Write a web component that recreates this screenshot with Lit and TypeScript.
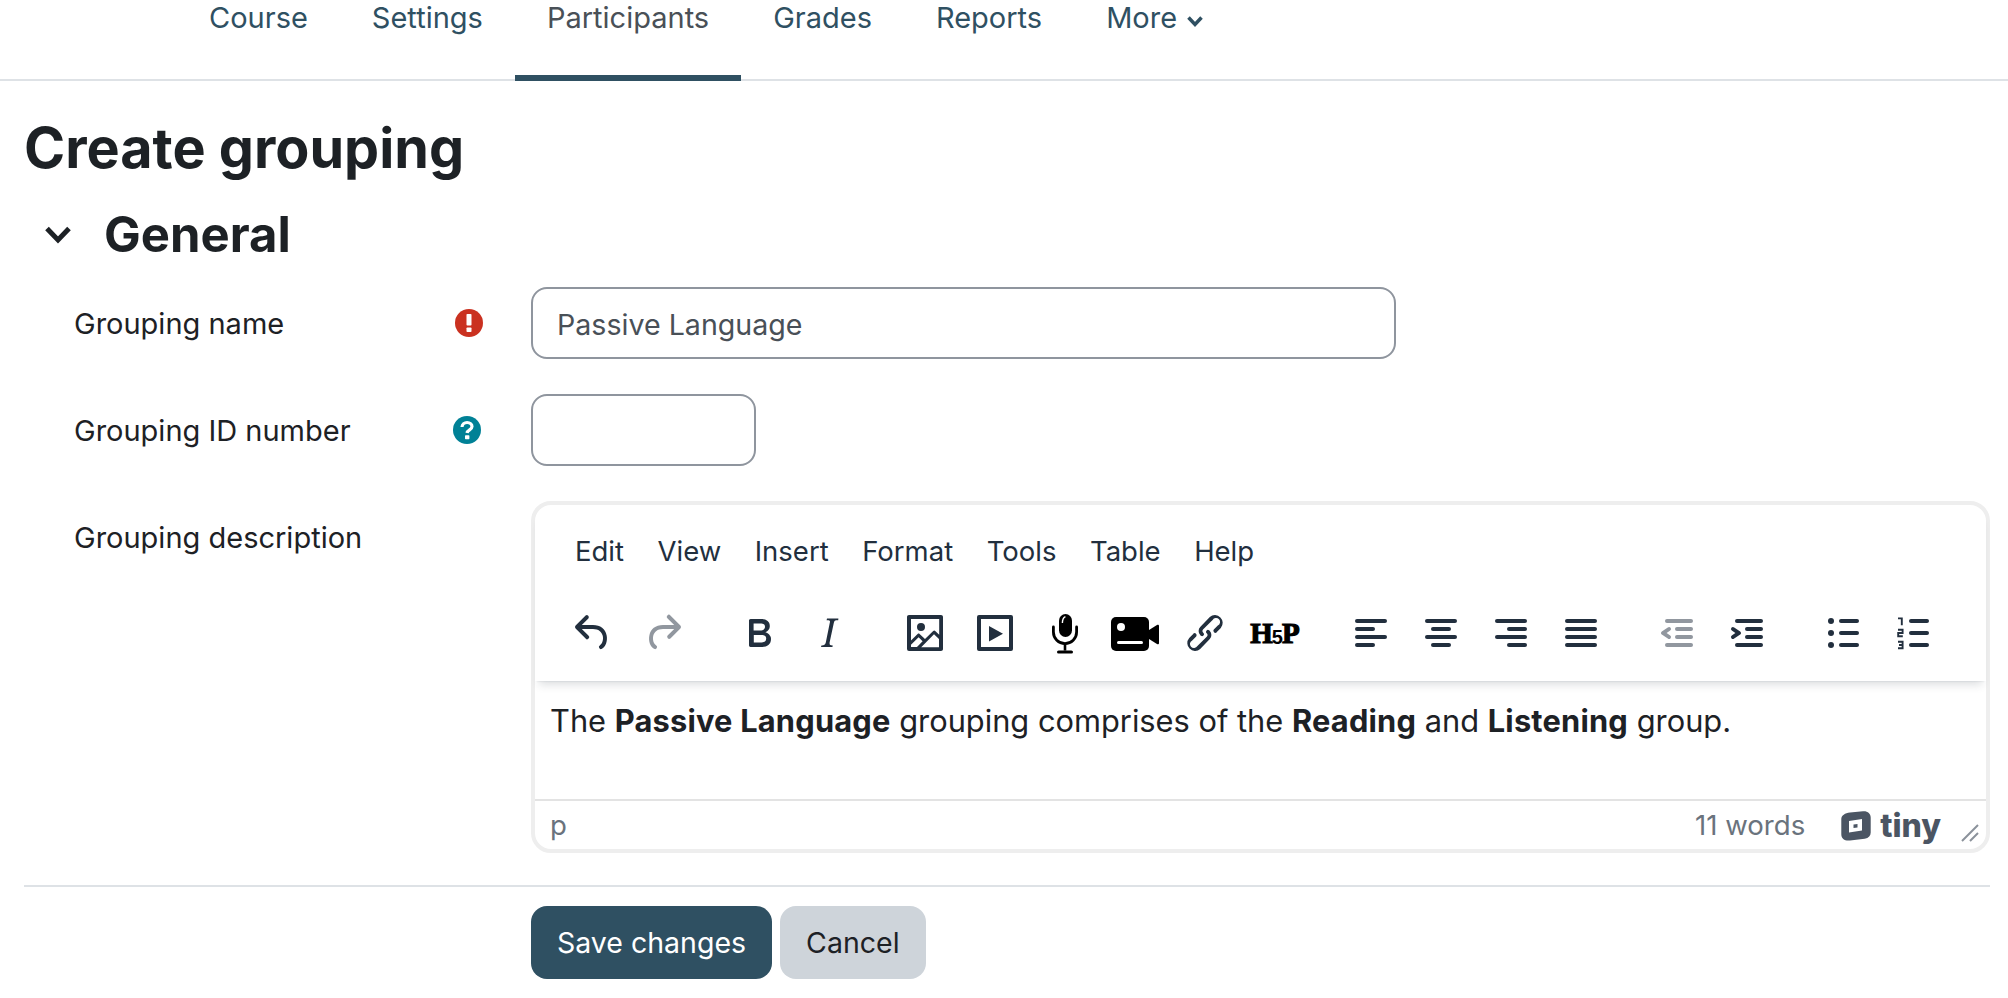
import { LitElement, css, html, svg } from 'lit';
import { customElement } from 'lit/decorators.js';

const tabs = ['Course', 'Settings', 'Participants', 'Grades', 'Reports'];
const menus = ['Edit', 'View', 'Insert', 'Format', 'Tools', 'Table', 'Help'];

const bars = (rows: number[][]) =>
    rows.map(([x, y, w]) => svg`<rect x=${x} y=${y} width=${w} height="2" rx="1"></rect>`);

const icons = {
    undo: svg`<path d="M6.4 8H12c3.7 0 6.2 2 6.8 5.1.6 2.7-.4 5.6-2.3 6.8a1 1 0 0 1-1-1.8c1.1-.6 1.8-2.7 1.4-4.6-.5-2.1-2.1-3.5-4.9-3.5H6.4l3.3 3.3a1 1 0 1 1-1.4 1.4l-5-5a1 1 0 0 1 0-1.4l5-5a1 1 0 0 1 1.4 1.4L6.4 8Z"></path>`,
    redo: svg`<path d="M17.6 10H12c-2.8 0-4.4 1.4-4.9 3.5-.4 2 .3 4 1.4 4.6a1 1 0 1 1-1 1.8c-2-1.2-2.9-4.1-2.3-6.8.6-3 3-5.1 6.8-5.1h5.6l-3.3-3.3a1 1 0 1 1 1.4-1.4l5 5a1 1 0 0 1 0 1.4l-5 5a1 1 0 0 1-1.4-1.4l3.3-3.3Z"></path>`,
    bold: svg`<path d="M7.8 19c-.3 0-.5 0-.6-.2l-.2-.5V5.7c0-.2 0-.4.2-.5l.6-.2h5c1.5 0 2.7.3 3.5 1 .7.6 1.1 1.4 1.1 2.5a3 3 0 0 1-.6 1.9c-.4.6-1 1-1.6 1.2.4.1.9.3 1.3.6s.8.7 1 1.2c.4.4.5 1 .5 1.6 0 1.3-.4 2.3-1.3 3-.8.7-2.1 1-3.8 1H7.8Zm5-8.3c.6 0 1.2-.1 1.6-.5.4-.3.6-.7.6-1.3 0-1.1-.8-1.7-2.3-1.7H9.3v3.5h3.4Zm.5 6c.7 0 1.3-.1 1.7-.4.4-.4.6-.9.6-1.5s-.2-1-.7-1.4c-.4-.3-1-.4-2-.4H9.4v3.8h4Z"></path>`,
    italic: svg`<path d="M16.7 4.7l-.1.9h-.3c-.6 0-1 0-1.4.3-.3.3-.4.6-.5 1.1l-2.1 9.8v.6c0 .5.4.8 1.4.8h.2l-.2.8H8l.2-.8h.2c1.1 0 1.8-.5 2-1.5l2-9.8.1-.5c0-.6-.4-.8-1.4-.8h-.3l.2-.9h5.8Z"></path>`,
    image: svg`<path d="m5 15.7 3.3-3.2c.3-.3.7-.3 1 0L12 15l4.1-4c.3-.4.8-.4 1 0l2 1.9V5H5v10.7ZM5 18V19h3l2.8-2.9-2-2L5 17.9Zm14-3-2.5-2.4-6.4 6.5H19v-4ZM4 3h16c.6 0 1 .4 1 1v16c0 .6-.4 1-1 1H4a1 1 0 0 1-1-1V4c0-.6.4-1 1-1Zm6 8a2 2 0 1 0 0-4 2 2 0 0 0 0 4Z"></path>`,
    play: svg`<path fill-rule="evenodd" d="M4 3h16a1 1 0 0 1 1 1v16a1 1 0 0 1-1 1H4a1 1 0 0 1-1-1V4a1 1 0 0 1 1-1Zm1 2v14h14V5H5Zm4 3.500 7 3.900-7 3.900V8.500Z"></path>`,
    mic: svg`<rect x="9" y="2.500" width="6.500" height="11.500" rx="3.250" fill="#000"></rect>
      <path d="M6.200 9v2.500a5.800 5.800 0 0 0 11.600 0V9" fill="none" stroke="#000" stroke-width="1.400" stroke-linecap="round"></path>
      <path d="M12 17.300v3.500" stroke="#000" stroke-width="1.300"></path>
      <path d="M8.800 21.500h6.400" stroke="#000" stroke-width="1.600" stroke-linecap="round"></path>
      <path d="M10.700 7c0-1.500.5-2.700 1.500-3.200" fill="none" stroke="#fff" stroke-width=".7"></path>`,
    link: svg`<path d="M6.2 12.3a1 1 0 0 1 1.4 1.4l-2 2a2 2 0 1 0 2.6 2.8l4.8-4.8a1 1 0 0 0 0-1.4 1 1 0 1 1 1.4-1.3 2.9 2.9 0 0 1 0 4L9.6 20a3.9 3.9 0 0 1-5.5-5.5l2-2Zm11.600-.6a1 1 0 0 1-1.400-1.400l2-2a2 2 0 1 0-2.600-2.800L11 10.300a1 1 0 0 0 0 1.400A1 1 0 1 1 9.600 13a2.900 2.900 0 0 1 0-4L14.400 4a3.900 3.900 0 0 1 5.500 5.500l-2 2Z"></path>`,
    left: bars([[4, 5, 16], [4, 9, 10], [4, 13, 16], [4, 17, 10]]),
    center: bars([[4, 5, 16], [7, 9, 10], [4, 13, 16], [7, 17, 10]]),
    right: bars([[4, 5, 16], [10, 9, 10], [4, 13, 16], [10, 17, 10]]),
    justify: bars([[4, 5, 16], [4, 9, 16], [4, 13, 16], [4, 17, 16]]),
    outdent: svg`${bars([[6, 5, 14], [11, 9, 9], [11, 13, 9], [6, 17, 14]])}<path d="M8.600 13.200a1 1 0 0 1-1.200 1.600l-3-2a1 1 0 0 1 0-1.600l3-2a1 1 0 0 1 1.200 1.600L6.800 12l1.800 1.200Z"></path>`,
    indent: svg`${bars([[6, 5, 14], [11, 9, 9], [11, 13, 9], [6, 17, 14]])}<path d="M4.400 13.200 6.200 12l-1.800-1.200a1 1 0 0 1 1.200-1.600l3 2a1 1 0 0 1 0 1.600l-3 2a1 1 0 1 1-1.200-1.600Z"></path>`,
    bullets: svg`${bars([[10, 5, 10], [10, 11, 10], [10, 17, 10]])}<circle cx="6" cy="6" r="1.500"></circle><circle cx="6" cy="12" r="1.500"></circle><circle cx="6" cy="18" r="1.500"></circle>`,
    numbers: svg`${bars([[10, 5, 10], [10, 11, 10], [10, 17, 10]])}
      <path d="M4.500 4.700h1.900v3.400M4.500 10.400h2.300v1.600H4.600v1.600h2.300M4.500 16.400h2.300v3.200H4.500M5 18h1.800" fill="none" stroke="#222f3e" stroke-width=".95"></path>`,
};

type Btn = { i?: keyof typeof icons; off?: boolean; kind?: string };
const groups: Btn[][] = [
    [{ i: 'undo' }, { i: 'redo', off: true }],
    [{ i: 'bold' }, { i: 'italic' }],
    [{ i: 'image' }, { i: 'play' }, { i: 'mic' }, { kind: 'video' }, { i: 'link' }, { kind: 'h5p' }],
    [{ i: 'left' }, { i: 'center' }, { i: 'right' }, { i: 'justify' }],
    [{ i: 'outdent', off: true }, { i: 'indent' }],
    [{ i: 'bullets' }, { i: 'numbers' }],
];

@customElement('app-root')
export class AppRoot extends LitElement {
    renderBtn(b: Btn) {
        if (b.kind === 'h5p') {
            return html`<span class="tbtn"><span class="h5p">H<i>5</i>P</span></span>`;
        }
        if (b.kind === 'video') {
            return html`<span class="tbtn"><svg width="48" height="48" viewBox="0 0 48 48">
              <rect x="0" y="8" width="38" height="34" rx="5" fill="#000"></rect>
              <path d="M38 21l8-5c1-.6 2-.2 2 1v17c0 1.200-1 1.600-2 1l-8-5Z" fill="#000"></path>
              <circle cx="10" cy="18" r="4" fill="#fff"></circle>
              <rect x="6" y="32" width="26" height="3" rx="1.500" fill="#fff"></rect>
            </svg></span>`;
        }
        return html`<span class="tbtn ${b.off ? 'off' : ''}"><svg width="48" height="48" viewBox="0 0 24 24">${icons[b.i!]}</svg></span>`;
    }

    render() {
        return html`
      <nav class="tabs">
        ${tabs.map((t) => html`<a class="tab ${t === 'Participants' ? 'active' : ''}">${t}</a>`)}
        <a class="tab">More <svg class="caret" width="18" height="16" viewBox="0 0 18 16"><path d="M2.500 4.500l6.500 7 6.500-7" fill="none" stroke="#2f5062" stroke-width="3.500"></path></svg></a>
      </nav>
      <main class="page">
        <h1>Create grouping</h1>
        <div class="section">
          <svg width="28" height="20" viewBox="0 0 28 20"><path d="M3 3.500l11 11.500 11-11.500" fill="none" stroke="#1d2125" stroke-width="5"></path></svg>
          <h2>General</h2>
        </div>
        <div class="row">
          <label>Grouping name</label>
          <span class="help">
            <svg width="28" height="28" viewBox="0 0 28 28"><circle cx="14" cy="14" r="14" fill="#ca3120"></circle><rect x="11.500" y="5" width="5" height="11.500" rx=".8" fill="#fff"></rect><rect x="11.500" y="18.500" width="5" height="4.500" rx=".8" fill="#fff"></rect></svg>
          </span>
          <input class="wide" .value=${'Passive Language'} />
        </div>
        <div class="row">
          <label>Grouping ID number</label>
          <span class="help q">
            <svg width="28" height="28" viewBox="0 0 28 28"><circle cx="14" cy="14" r="14" fill="#008196"></circle><path d="M9 11c.2-2.800 2.400-4.500 5.100-4.500 2.800 0 4.900 1.700 4.900 4.100 0 3.400-4.500 3.100-4.900 6.400" fill="none" stroke="#fff" stroke-width="3.200"></path><rect x="12" y="19.200" width="4.400" height="4" rx=".7" fill="#fff"></rect></svg>
          </span>
          <input class="short" />
        </div>
        <div class="row last">
          <label>Grouping description</label>
          <span class="help"></span>
          <div class="editor">
            <div class="header">
              <div class="menubar">${menus.map((m) => html`<span>${m}</span>`)}</div>
              <div class="toolbar">
                ${groups.map((g) => html`<div class="group">${g.map((b) => this.renderBtn(b))}</div>`)}
              </div>
            </div>
            <div class="content">The <b>Passive Language</b> grouping comprises of the <b>Reading</b> and <b>Listening</b> group.</div>
            <div class="status">
              <span class="path">p</span>
              <span class="words">11 words</span>
              <span class="tiny">
                <svg width="30" height="30" viewBox="0 0 30 30">
                  <path d="M9 1.500 22 .3c4.500-.4 7.700 2.200 7.700 6.200v15c0 3.200-2 5.500-6 6.200L9 29.500c-5 .7-8.700-1.800-8.700-6.300V8c0-3.500 3.700-6 8.700-6.500Z" fill="#4b5563"></path>
                  <path fill-rule="evenodd" d="M8 10 21 8v11.500l-13 2V10Zm4.500 3.500v3.500l4-.6v-3.500l-4 .6Z" fill="#fff"></path>
                </svg>
                <b>tiny</b>
              </span>
              <svg class="grip" width="18" height="18" viewBox="0 0 18 18"><path d="M1 17 17 1M9 17l8-8" stroke="#8b929b" stroke-width="2" fill="none"></path></svg>
            </div>
          </div>
        </div>
        <hr />
        <div class="actions">
          <button class="primary">Save changes</button>
          <button class="secondary">Cancel</button>
        </div>
      </main>
    `;
    }

    static styles = css`
    :host {
      display: block;
      background: #fff;
      color: #1d2125;
      font-family: Inter, "Liberation Sans", sans-serif;
      font-size: 29px;
      height: 998px;
      overflow: hidden;
    }

    .tabs {
      display: flex;
      height: 81px;
      box-sizing: border-box;
      padding-left: 177px;
      border-bottom: 2px solid #dee2e6;
    }
    .tab {
      height: 81px;
      padding: 0 32px;
      box-sizing: border-box;
      color: #2f5062;
      line-height: 36px;
      white-space: nowrap;
    }
    .tab.active {
      color: #495057;
      border-bottom: 6px solid #2f5062;
    }
    .caret {
      vertical-align: -1px;
      margin-left: 1px;
    }

    .page {
      padding: 37px 18px 0 24px;
    }
    h1 {
      margin: 0;
      font-size: 55.700px;
      line-height: 60px;
      font-weight: 700;
    }
    .section {
      display: flex;
      align-items: center;
      gap: 32px;
      margin: 32px 0 27px 20px;
    }
    h2 {
      margin: 0;
      font-size: 49px;
      line-height: 50px;
      font-weight: 700;
    }

    .row {
      display: grid;
      grid-template-columns: 381px 76px 1fr;
      align-items: start;
      padding-left: 50px;
      margin-bottom: 35px;
    }
    .row.last {
      margin-bottom: 32px;
    }
    label {
      padding-top: 2px;
      line-height: 70px;
    }
    .help {
      display: flex;
      height: 72px;
      align-items: center;
    }
    .help.q {
      margin-left: -2px;
    }
    input {
      display: block;
      box-sizing: border-box;
      height: 72px;
      border: 2px solid #8f959e;
      border-radius: 16px;
      padding: 2px 24px 0;
      font: inherit;
      font-size: 28.600px;
      color: #495057;
      background: #fff;
      outline: none;
    }
    input.wide {
      width: 865px;
    }
    input.short {
      width: 225px;
    }

    .editor {
      box-sizing: border-box;
      height: 352px;
      border: 4px solid #eee;
      border-radius: 20px;
      display: flex;
      flex-direction: column;
      color: #1d2125;
    }
    .header {
      padding: 28px 0 24px 23px;
      box-shadow: 0 2px 2px -2px rgba(34, 47, 62, .2), 0 8px 8px -4px rgba(34, 47, 62, .15);
      border-radius: 16px 16px 0 0;
    }
    .menubar {
      display: flex;
      gap: 33.500px;
      padding-left: 17px;
      font-size: 27.500px;
      line-height: 36px;
      color: #222f3e;
    }
    .toolbar {
      display: flex;
      gap: 26px;
      margin-top: 40px;
    }
    .group {
      display: flex;
    }
    .tbtn {
      display: flex;
      width: 70px;
      height: 48px;
      align-items: center;
      justify-content: center;
      fill: #222f3e;
    }
    .tbtn.off {
      fill: #91979f;
    }
    .h5p {
      display: flex;
      align-items: center;
      font-family: "Liberation Serif", serif;
      font-weight: 700;
      font-size: 29px;
      line-height: 30px;
      color: #000;
      -webkit-text-stroke: 1.200px #000;
    }
    .h5p i {
      font-family: "Liberation Sans", sans-serif;
      font-style: normal;
      font-size: 20px;
      line-height: 18px;
      margin: 7px -1px 0;
      -webkit-text-stroke: 0;
    }

    .content {
      flex: 1;
      padding: 22px 0 0 15px;
      font-size: 30.800px;
      line-height: 36px;
      color: #1d2125;
    }
    .content b {
      letter-spacing: .2px;
    }
    .status {
      display: flex;
      align-items: center;
      height: 48px;
      padding: 0 7px 0 15px;
      border-top: 2px solid #e3e3e3;
      color: #6a737d;
      font-size: 27.600px;
    }
    .words {
      margin-left: auto;
    }
    .tiny {
      display: flex;
      align-items: center;
      gap: 9px;
      margin: 2px 0 0 36px;
      color: #4b5563;
    }
    .tiny b {
      font-size: 32px;
      line-height: 32px;
      font-weight: 800;
    }
    .grip {
      margin: 16px 0 0 20px;
    }

    hr {
      border: 0;
      border-top: 2px solid #dee2e6;
      margin: 32px 0 19px;
    }
    .actions {
      display: flex;
      gap: 8px;
      padding-left: 507px;
    }
    button {
      height: 73px;
      border: 0;
      border-radius: 16px;
      font: inherit;
      font-size: 28.500px;
      padding: 0 26px;
    }
    .primary {
      background: #2f5062;
      color: #fff;
    }
    .secondary {
      background: #ced4da;
      color: #1d2125;
    }
  `;
}

declare global {
    interface HTMLElementTagNameMap {
        'app-root': AppRoot;
    }
}
